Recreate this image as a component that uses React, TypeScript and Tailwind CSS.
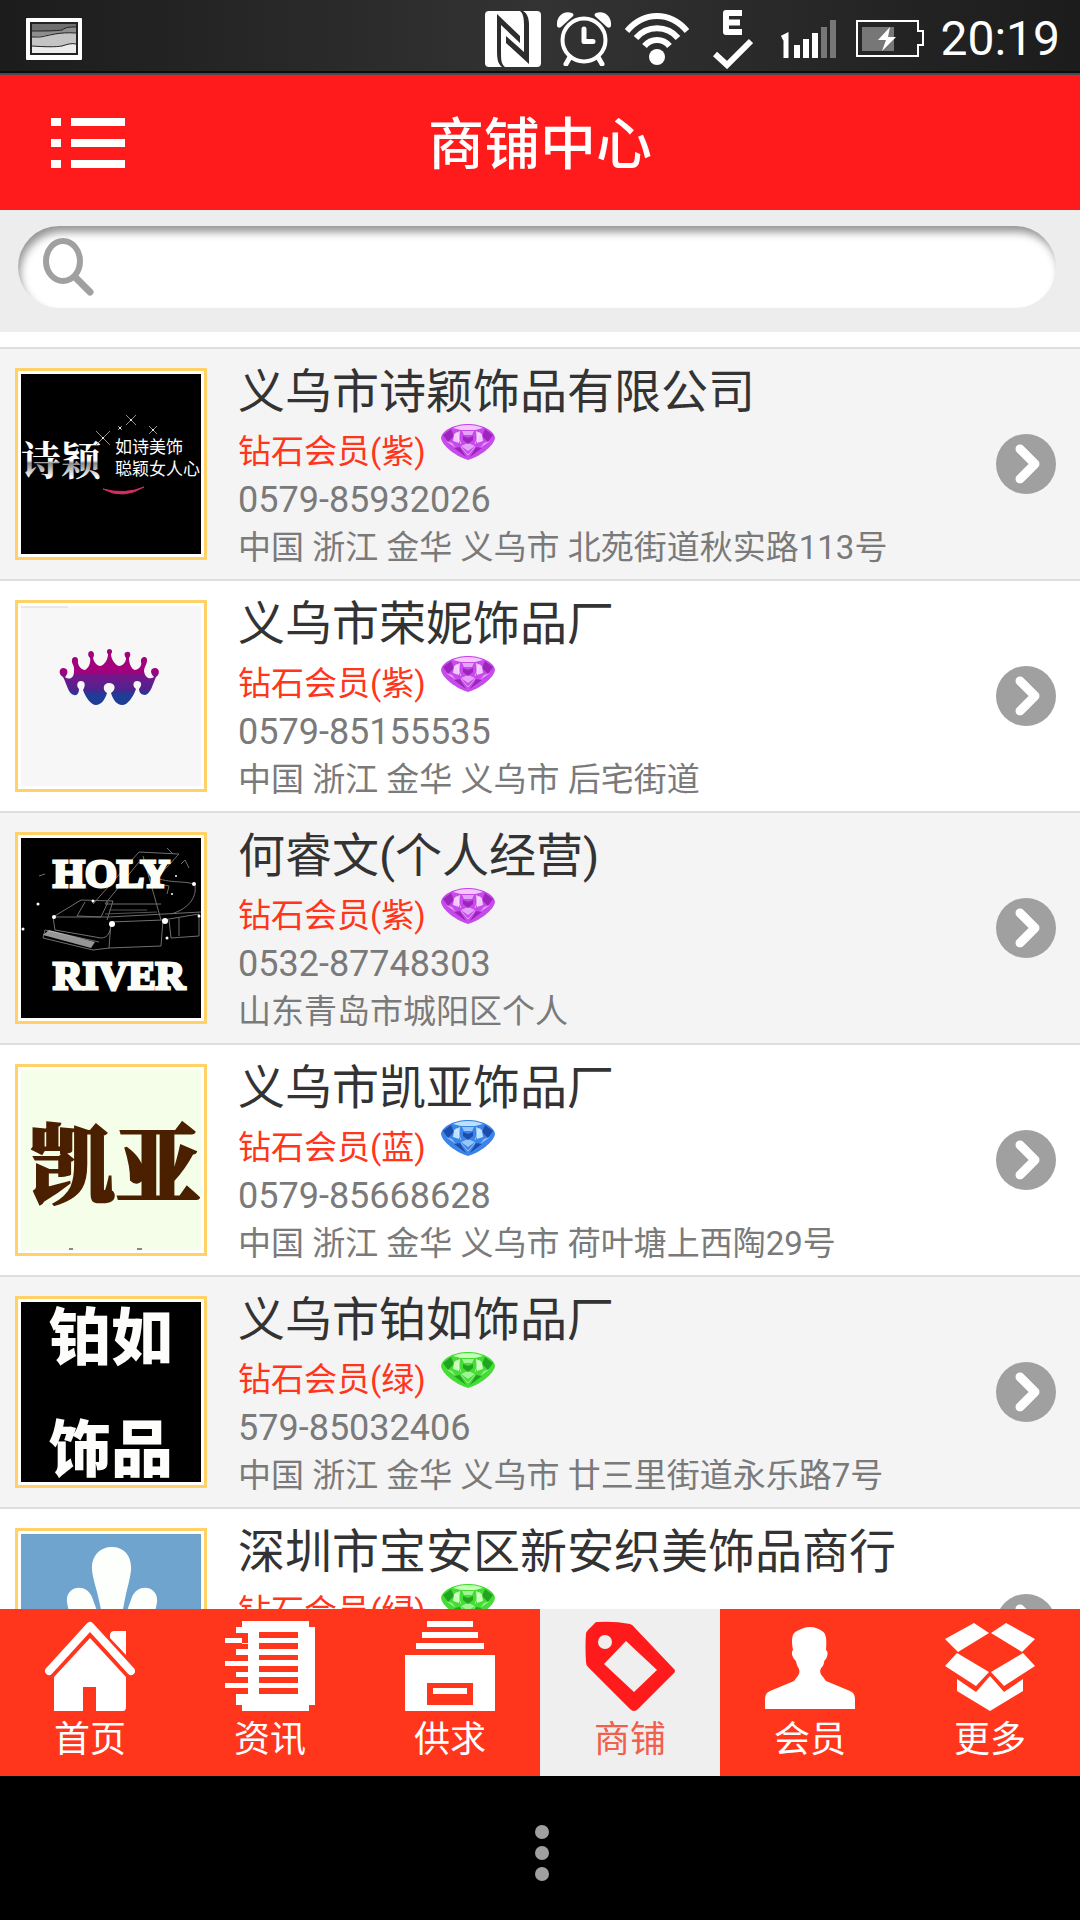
import React, { useState } from "react";

const FONT = "font-['Roboto','Noto_Sans_CJK_SC',sans-serif]";

/* ---------- status bar ---------- */

function PictureIcon() {
  return (
    <svg width="56" height="42" viewBox="0 0 56 42" aria-hidden="true">
      <rect width="56" height="42" rx="1" fill="#fff" />
      <rect x="4" y="4" width="48" height="33" fill="#222" />
      <rect x="6" y="6" width="44" height="29" fill="#6f6f6f" />
      <path d="M6 13C18 13 30 13 36 12C40 9 44 9 50 9V35H6Z" fill="#8d8d8d" />
      <path d="M6 19C20 18 32 14 50 15V35H6Z" fill="#c4c4c4" />
      <path d="M6 28C20 29 30 29 36 28C42 26 46 25 50 26V35H6Z" fill="#ececec" />
      <path
        d="M6 13C18 13 30 13 36 12C40 9 44 9 50 9M6 19H14C26 17 32 14 50 15M6 28C20 29 30 29 36 28C42 26 46 25 50 26"
        fill="none"
        stroke="#222"
        strokeWidth="1"
      />
    </svg>
  );
}

function NfcIcon() {
  return (
    <svg width="56" height="56" viewBox="0 0 56 56" aria-hidden="true">
      <rect width="56" height="56" rx="4" fill="#fff" />
      <path d="M12 3L35 25V32L16 14V40C16 48 16 53 20 56H17C13 53 12 48 12 40Z" fill="#2d2d2d" />
      <path d="M44 53L21 32V25L39 41V14C39 7 38 2 35 0H38C42 2 44 7 44 14Z" fill="#2d2d2d" />
    </svg>
  );
}

function AlarmIcon() {
  return (
    <svg width="54" height="54" viewBox="0 0 54 54" aria-hidden="true">
      <path d="M0 14C-1 5 6-2 15 1C17 2 17 3 15 5L4 15C2 16 1 16 0 14ZM54 14C55 5 48-2 39 1C37 2 37 3 39 5L50 15C52 16 53 16 54 14Z" fill="#fff" />
      <circle cx="27" cy="28" r="21.500" fill="none" stroke="#fff" strokeWidth="4" />
      <path d="M27 17V29.500H36" fill="none" stroke="#fff" strokeWidth="5" strokeLinecap="round" strokeLinejoin="round" />
      <path d="M13 45L9 52M41 45L45 52" stroke="#fff" strokeWidth="5" strokeLinecap="round" />
    </svg>
  );
}

function WifiIcon() {
  return (
    <svg width="64" height="54" viewBox="0 0 64 54" fill="none" stroke="#fff" strokeWidth="6" aria-hidden="true">
      <path d="M2 19C19-1 45-1 62 19M11 26C22 13 42 13 53 26M19.500 34C26 26 38 26 44.500 34" />
      <circle cx="32" cy="45" r="8" fill="#fff" stroke="none" />
    </svg>
  );
}

function EdgeCheckIcon() {
  return (
    <svg width="40" height="60" viewBox="0 0 40 60" fill="none" stroke="#fff" aria-hidden="true">
      <path d="M29 4H13V23H29M13 13.500H27" strokeWidth="6" strokeLinejoin="round" />
      <path d="M2 45L14 56L38 32" strokeWidth="6" />
    </svg>
  );
}

function SignalIcon() {
  return (
    <svg width="55" height="38" viewBox="0 0 55 38" aria-hidden="true">
      <path d="M1 18L5 16V38" fill="none" stroke="#fff" strokeWidth="5" />
      <path d="M13 25h6v13h-6zM22 19h6v19h-6zM31 13h6v25h-6z" fill="#fff" />
      <path d="M40 7h6v31h-6zM49 0h6v38h-6z" fill="#777" />
    </svg>
  );
}

function BatteryIcon() {
  return (
    <svg width="68" height="37" viewBox="0 0 68 37" aria-hidden="true">
      <path d="M1 1H62V11H67V25H62V36H1Z" fill="none" stroke="#fff" strokeWidth="2" />
      <rect x="6" y="7" width="32" height="24" fill="#777" />
      <path d="M34 7L22 20H30L26 31L40 17H32Z" fill="#fff" />
    </svg>
  );
}

function StatusBar() {
  return (
    <div className="flex h-[75px] shrink-0 items-center justify-between border-b-2 border-[#4b4b4b] bg-linear-to-r from-[#1c1c1c] via-[#333333] to-[#1c1c1c] pt-1 pl-[26px] pr-5 shadow-[inset_0_-2px_0_#0d0d0d]">
      <PictureIcon />
      <div className="flex items-center">
        <NfcIcon />
        <span className="ml-4"><AlarmIcon /></span>
        <span className="ml-3.5"><WifiIcon /></span>
        <span className="ml-6"><EdgeCheckIcon /></span>
        <span className="ml-7"><SignalIcon /></span>
        <span className="ml-5"><BatteryIcon /></span>
        <span className="ml-4 text-[48px] leading-[56px] text-white">20:19</span>
      </div>
    </div>
  );
}

/* ---------- header and search ---------- */

function Header() {
  return (
    <header className="grid h-[135px] shrink-0 grid-cols-[1fr_auto_1fr] items-center bg-[#ff1b1b] px-[51px]">
      <button type="button" aria-label="菜单" className="w-fit">
        <svg width="74" height="50" viewBox="0 0 74 50" fill="#fff" aria-hidden="true">
          <path d="M0 0h10v8H0zM0 21h10v8H0zM0 42h10v8H0zM20 0h54v8H20zM20 21h54v8H20zM20 42h54v8H20z" />
        </svg>
      </button>
      <h1 className="pt-1 text-[56px] leading-[64px] font-medium text-white">商铺中心</h1>
    </header>
  );
}

function SearchBar() {
  return (
    <form role="search" className="shrink-0 bg-[#ededed] px-[18px] pt-4 pb-6" onSubmit={(e) => e.preventDefault()}>
      <label className="mr-1.5 flex h-[82px] items-center rounded-full bg-white pl-[25px] pr-8 shadow-[inset_3px_7px_8px_-1px_#949494]">
        <svg width="52" height="58" viewBox="0 0 52 58" fill="none" stroke="#a0a0a0" aria-hidden="true">
          <ellipse cx="20" cy="23" rx="17" ry="20" strokeWidth="6" />
          <path d="M32 39L47 54" strokeWidth="7" strokeLinecap="round" />
        </svg>
        <input type="search" aria-label="搜索" className="ml-4 h-14 min-w-0 flex-1 bg-transparent text-[33px] text-[#333333] outline-none" />
      </label>
    </form>
  );
}

/* ---------- shop logos ---------- */

function Sparkle({ x, y, r }: { x: number; y: number; r: number }) {
  return (
    <g transform={`translate(${x} ${y})`} stroke="#8f8f8f" strokeWidth="1">
      <path d={`M${-r} ${-r}L${r} ${r}M${r} ${-r}L${-r} ${r}`} />
      <circle r="1" fill="#fff" stroke="none" />
    </g>
  );
}

function ShiyingLogo() {
  return (
    <svg viewBox="0 0 180 180" className="size-full">
      <defs>
        <linearGradient id="silver" x1="0" y1="0" x2="0" y2="1">
          <stop offset="0.300" stopColor="#fff" />
          <stop offset="0.550" stopColor="#fff" />
          <stop offset="0.600" stopColor="#8a8a8a" />
          <stop offset="0.850" stopColor="#fff" />
        </linearGradient>
      </defs>
      <rect width="180" height="180" fill="#000" />
      <text x="0" y="101" fontSize="40" fontWeight="700" fill="url(#silver)" fontFamily="Noto Serif CJK SC, Noto Sans CJK SC, serif">诗颖</text>
      <text x="94" y="79" fontSize="17" fill="#fff" fontFamily="Noto Sans CJK SC, sans-serif">如诗美饰</text>
      <text x="94" y="101" fontSize="17" fill="#fff" fontFamily="Noto Sans CJK SC, sans-serif">聪颖女人心</text>
      <Sparkle x={82} y={64} r={7} />
      <Sparkle x={110} y={46} r={5} />
      <Sparkle x={99} y={54} r={2} />
      <Sparkle x={132} y={56} r={4} />
      <path d="M82 115Q102 126 123 113Q104 121 82 115Z" fill="#d62c66" stroke="#d62c66" strokeWidth="1" />
    </svg>
  );
}

function CrownLogo() {
  return (
    <svg viewBox="0 0 180 180" className="size-full">
      <defs>
        <linearGradient id="crown" x1="0" y1="0" x2="0" y2="1">
          <stop offset="0.420" stopColor="#a3007e" />
          <stop offset="0.450" stopColor="#7b1487" />
          <stop offset="0.550" stopColor="#6b1a8c" />
          <stop offset="0.750" stopColor="#4a258f" />
          <stop offset="0.800" stopColor="#1f3d96" />
        </linearGradient>
      </defs>
      <rect width="180" height="180" fill="#f7f7f7" />
      <path d="M0 1H47" stroke="#d8d8d8" strokeWidth="1" />
      <path
        d="M44 71C48 74 53 73 53 65C54 60 50 57 51 54C51 50 57 50 57 54C56 60 61 64 64 64C68 62 70 56 69 52C66 49 67 45 70 45C73 45 74 49 72 52C73 56 76 60 79 60C84 59 87 53 87 48C85 46 86 43 88.500 43C91 43 92 46 90 48C90 53 94 59 98 60C102 60 105 56 105 52C103 49 103 46 106 46C110 45 110 50 108 52C108 57 110 63 114 64C119 63 121 59 120 56C119 50 127 49 126 55C126 58 123 61 123 65C124 72 129 74 133 71C128 66 130 62 134 62C139 62 139 69 135 71C132 77 130 88 124 89C120 89 118 86 118 83C122 78 120 75 116 75C112 75 111 80 115 83C112 91 107 99 101 99C96 99 92 94 90 87C96 83 94 77 88 77C82 77 81 84 86 87C84 94 80 99 75 99C70 99 65 92 62 84C65 79 64 75 60 75C56 75 55 80 58 83C58 87 56 90 53 89C47 88 46 78 42 71C38 69 37 63 42 62C47 62 48 67 44 71Z"
        fill="url(#crown)"
      />
    </svg>
  );
}

function HolyRiverLogo() {
  return (
    <svg viewBox="0 0 180 180" className="size-full">
      <rect width="180" height="180" fill="#000" />
      <g fill="none" stroke="#6f6f6f" strokeWidth="1">
        <path d="M72 66L118 14L158 16L136 40C150 46 172 42 174 48C176 62 164 72 150 76M122 18L140 82M118 24L84 66L140 66" />
        <path d="M32 79L60 62L92 63L86 82M64 64L56 78L80 79L87 64M32 79H88L180 74M32 79L34 92L80 100C88 100 90 92 90 84L142 82L140 108L88 110L72 112L22 100L24 92L78 104M142 82L178 76V98L150 100L148 82M158 80V98M90 84L88 110" />
        <path d="M84 76L136 74M88 72H126" stroke="#555" />
        <path d="M160 26L164 22L168 30M18 38L24 36M146 10L152 16M138 46L148 48L146 56" />
      </g>
      <path d="M28 92L74 104L70 110L22 97Z" fill="#d5d5d5" opacity="0.700" />
      <g fill="#fff">
        <circle cx="91" cy="86" r="3" /><circle cx="144" cy="83" r="3" /><circle cx="33" cy="79" r="2" />
        <circle cx="173" cy="46" r="2" /><circle cx="17" cy="66" r="1.500" /><circle cx="2" cy="91" r="1.500" />
        <circle cx="72" cy="63" r="1.500" /><circle cx="178" cy="78" r="1.500" /><circle cx="151" cy="56" r="1" />
        <circle cx="146" cy="100" r="1.500" /><circle cx="155" cy="38" r="1" />
      </g>
      <g fill="#fdfdf8" stroke="#fdfdf8" strokeWidth="3" fontFamily="Liberation Serif, serif" fontWeight="700" fontSize="41">
        <text x="32" y="49">HOLY</text>
        <text x="32" y="151">RIVER</text>
      </g>
    </svg>
  );
}

function KaiyaLogo() {
  return (
    <svg viewBox="0 0 180 180" className="size-full">
      <rect width="180" height="180" fill="#f4fee9" />
      <text x="8" y="127" fontSize="86" fontWeight="900" fill="#4a2000" stroke="#4a2000" strokeWidth="2" fontFamily="Noto Serif CJK SC, Noto Sans CJK SC, serif">凯亚</text>
      <path d="M48 179h4M116 179h5" stroke="#888" strokeWidth="2" />
    </svg>
  );
}

function BoruLogo() {
  return (
    <svg viewBox="0 0 180 180" className="size-full">
      <rect width="180" height="180" fill="#000" />
      <g fill="#fdfdfb" fontFamily="Noto Sans CJK SC, sans-serif" fontWeight="900" fontSize="62">
        <text x="28" y="58">铂如</text>
        <text x="28" y="170">饰品</text>
      </g>
    </svg>
  );
}

function PetalLogo() {
  return (
    <svg viewBox="0 0 180 180" className="size-full">
      <rect width="180" height="180" fill="#6fa4cf" />
      <g fill="#fcfffc">
        <path d="M91 13C103 13 111 22 110 36C109 48 103 62 100 90L91 130L82 90C79 62 72 48 71 36C70 22 79 13 91 13Z" />
        <path d="M46 68C44 52 65 48 71 63L88 110L60 92C52 86 47 78 46 68ZM136 68C138 52 117 48 111 63L94 110L122 92C130 86 135 78 136 68Z" />
      </g>
    </svg>
  );
}

/* ---------- shop list ---------- */

type Grade = "紫" | "蓝" | "绿";

const GEM: Record<Grade, { light: string; mid: string; dark: string }> = {
  紫: { light: "#f4c8ff", mid: "#c64bea", dark: "#9d24bd" },
  蓝: { light: "#b9e2ff", mid: "#3c84e8", dark: "#1c4cae" },
  绿: { light: "#c6ffb8", mid: "#45dc36", dark: "#1fa51f" },
};

function Diamond({ grade }: { grade: Grade }) {
  const { light, mid, dark } = GEM[grade];
  return (
    <svg width="54" height="36" viewBox="0 0 54 36" aria-hidden="true">
      <path d="M0 14C1 6 14 0 27 0S53 6 54 14C53 22 38 33 27 36C16 33 1 22 0 14Z" fill={mid} />
      <path d="M2 11L10 5L13 12L7 18ZM52 11L44 5L41 12L47 18ZM13 24L19 23L25 33ZM41 24L35 23L29 33Z" fill={dark} />
      <path d="M12 4C20 0 34 0 42 4L34 6H20ZM13 10L19 7L18 19L12 17ZM41 10L35 7L36 19L42 17Z" fill={light} />
      <path d="M21 7H33L31 11H23ZM20 22L27 19L34 22L27 27ZM5 17L11 19L15 24ZM49 17L43 19L39 24Z" fill={light} opacity="0.700" />
      <path d="M22 12L27 14L32 12L32 16L27 20L22 16ZM4 14L9 16M50 14L45 16" fill={dark} />
      <path d="M15 8L20 20M39 8L34 20M20 23L27 31L34 23" fill="none" stroke="#fff" strokeWidth="1" opacity="0.500" />
    </svg>
  );
}

type Shop = {
  name: string;
  grade: Grade;
  phone?: string;
  address?: string;
  Logo: () => React.JSX.Element;
};

const SHOPS: Shop[] = [
  { name: "义乌市诗颖饰品有限公司", grade: "紫", phone: "0579-85932026", address: "中国 浙江 金华 义乌市 北苑街道秋实路113号", Logo: ShiyingLogo },
  { name: "义乌市荣妮饰品厂", grade: "紫", phone: "0579-85155535", address: "中国 浙江 金华 义乌市 后宅街道", Logo: CrownLogo },
  { name: "何睿文(个人经营)", grade: "紫", phone: "0532-87748303", address: "山东青岛市城阳区个人", Logo: HolyRiverLogo },
  { name: "义乌市凯亚饰品厂", grade: "蓝", phone: "0579-85668628", address: "中国 浙江 金华 义乌市 荷叶塘上西陶29号", Logo: KaiyaLogo },
  { name: "义乌市铂如饰品厂", grade: "绿", phone: "579-85032406", address: "中国 浙江 金华 义乌市 廿三里街道永乐路7号", Logo: BoruLogo },
  { name: "深圳市宝安区新安织美饰品商行", grade: "绿", Logo: PetalLogo },
];

function ShopRow({ shop }: { shop: Shop }) {
  const { Logo } = shop;
  return (
    <li className="border-b-2 border-[#dddddd] odd:bg-[#f4f4f4]">
      <a href="#shop" className="flex min-h-[230px] items-center pl-[15px] pr-6">
        <div className="size-48 shrink-0 border-[3px] border-[#ffd166] bg-white p-[3px]">
          <Logo />
        </div>
        <div className="ml-[31px] min-w-0 flex-1 self-stretch pt-[15px] whitespace-nowrap">
          <h2 className="text-[47px] leading-[56px] text-[#333333]">{shop.name}</h2>
          <p className="mt-2 flex items-start text-[33px] leading-[48px] text-[#ff361b]">
            钻石会员({shop.grade})
            <span className="-mt-1 ml-[15px]"><Diamond grade={shop.grade} /></span>
          </p>
          <p className="text-[36px] leading-[48px] text-[#7a7a7a]">{shop.phone}</p>
          <p className="text-[33px] leading-[48px] text-[#7a7a7a]">{shop.address}</p>
        </div>
        <svg width="60" height="60" viewBox="0 0 60 60" className="shrink-0" aria-hidden="true">
          <circle cx="30" cy="30" r="30" fill="#a0a0a0" />
          <path d="M24 16L39 31L24 46" fill="none" stroke="#8c8c8c" strokeWidth="8" strokeLinecap="round" strokeLinejoin="round" />
          <path d="M24 15L39 30L24 45" fill="none" stroke="#fff" strokeWidth="9" strokeLinecap="round" strokeLinejoin="round" />
        </svg>
      </a>
    </li>
  );
}

/* ---------- bottom navigation ---------- */

const TABS: { label: string; icon: React.ReactNode }[] = [
  {
    label: "首页",
    icon: (
      <>
        <path d="M65 13Q66 10 69 10H81V34L65 17Z" />
        <path d="M45 17L81 56V86Q81 90 78 90H51V66H38V90H9V56Z" />
        <path d="M4 50L45 5L86 50" fill="none" stroke="currentColor" strokeWidth="8" strokeLinecap="round" strokeLinejoin="round" />
      </>
    ),
  },
  {
    label: "资讯",
    icon: (
      <path
        fillRule="evenodd"
        d="M17 0H84V6H90V84H84V90H17V84H11V73H23V67H0V62H23V56H11V51H23V45H0V40H23V34H11V28H23V22H0V17H17V23H23V12H11V6H17ZM34 11V17H73V11ZM34 22V28H73V22ZM34 34V39H73V34ZM34 45V51H73V45ZM34 56V62H73V56ZM34 67V73H73V67Z"
      />
    ),
  },
  {
    label: "供求",
    icon: (
      <path fillRule="evenodd" d="M22 0H68V6H22ZM17 11H73V17H17ZM11 22H79V28H11ZM0 34H90V90H0ZM22 62V84H68V62ZM28 67H62V73H28Z" />
    ),
  },
  {
    label: "商铺",
    icon: (
      <path
        fillRule="evenodd"
        d="M12 1Q30 0 45 3Q48 4 50 7L88 47Q92 50 88 53L53 88Q49 92 45 88L3 46Q1 44 1 41Q0 26 1 12Q2 10 4 8L9 3Q10 1 12 1ZM20 14A7 7 0 1 0 20 28A7 7 0 1 0 20 14ZM41 20L19 43L49 71L72 49Z"
      />
    ),
  },
  {
    label: "会员",
    icon: (
      <path d="M45 6C50 6 54 8 57 10C61 12 62 18 61 29C64 31 62 36 61 38C58 40 60 43 57 46C54 49 55 53 58 56L61 60L85 70Q90 72 90 78V88H0V78Q0 72 5 70L29 60L32 56C35 53 35 49 33 46C31 43 32 40 29 38C27 35 26 31 28 29C26 18 27 12 32 10C36 8 40 6 45 6Z" />
    ),
  },
  {
    label: "更多",
    icon: (
      <path d="M29 2L44 12L13 31L0 18ZM61 2L90 18L77 31L46 12ZM12 32L44 51L31 65L0 45ZM78 32L90 45L59 65L46 51ZM45 55L59 71L78 58V70L45 90L12 70V58L31 71Z" />
    ),
  },
];

function TabBar() {
  const [active, setActive] = useState("商铺");
  return (
    <nav className="grid h-[167px] shrink-0 grid-cols-6 bg-[#ff361b]">
      {TABS.map(({ label, icon }) => {
        const on = label === active;
        return (
          <button
            key={label}
            type="button"
            aria-current={on ? "page" : undefined}
            onClick={() => setActive(label)}
            className={`flex flex-col items-center pt-3 ${on ? "bg-[#efefef]" : ""}`}
          >
            <svg width="90" height="90" viewBox="0 0 90 90" fill="currentColor" className={on ? "text-[#ff1b1b]" : "text-white"} aria-hidden="true">
              {icon}
            </svg>
            <span className={`mt-[5px] text-[36px] leading-[48px] ${on ? "text-[#f0604c]" : "text-white"}`}>{label}</span>
          </button>
        );
      })}
    </nav>
  );
}

function SystemBar() {
  return (
    <div className="flex h-36 shrink-0 items-center justify-center bg-black pt-2.5 pl-1">
      <button type="button" aria-label="更多选项">
        <svg width="14" height="56" viewBox="0 0 14 56" fill="#a0a0a0" aria-hidden="true">
          <circle cx="7" cy="7" r="7" />
          <circle cx="7" cy="28" r="7" />
          <circle cx="7" cy="49" r="7" />
        </svg>
      </button>
    </div>
  );
}

export default function App() {
  return (
    <div lang="zh-CN" className={`flex h-screen flex-col overflow-hidden bg-white ${FONT}`}>
      <StatusBar />
      <Header />
      <SearchBar />
      <main className="min-h-0 flex-1 overflow-y-auto pt-[15px] [scrollbar-width:none]">
        <ul className="border-t-2 border-[#dddddd]">
          {SHOPS.map((shop) => (
            <ShopRow key={shop.name} shop={shop} />
          ))}
        </ul>
      </main>
      <TabBar />
      <SystemBar />
    </div>
  );
}
